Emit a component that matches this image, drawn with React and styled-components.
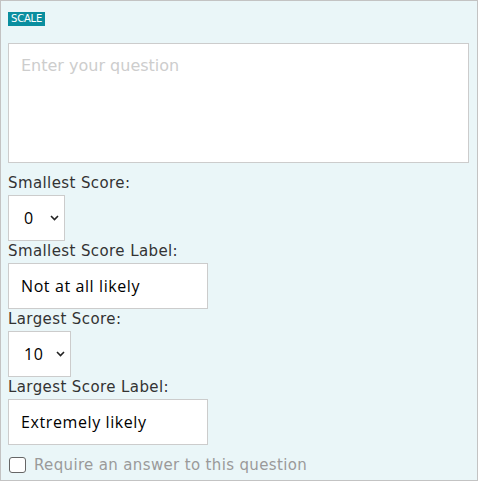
import React from "react";
import styled, { createGlobalStyle } from "styled-components";

const GlobalStyle = createGlobalStyle`
  html, body {
    margin: 0;
    padding: 0;
    background: #ffffff;
  }
  * {
    box-sizing: border-box;
  }
`;

const Card = styled.div`
  width: 478px;
  height: 481px;
  background: #eaf6f8;
  border: 1px solid #c3c3c3;
  padding: 11px 7px 0 7px;
  font-family: "DejaVu Sans", sans-serif;
  color: #333333;
  display: flex;
  flex-direction: column;
  align-items: flex-start;
`;

const Badge = styled.span`
  background: #0a8e9f;
  color: #ffffff;
  font-family: "DejaVu Sans", sans-serif;
  font-size: 10px;
  line-height: 14px;
  padding: 0 3px;
  letter-spacing: -0.2px;
`;

const Question = styled.textarea`
  margin-top: 17px;
  width: 461px;
  height: 120px;
  border: 1px solid #cccccc;
  background: #ffffff;
  padding: 12px;
  font-family: "DejaVu Sans", sans-serif;
  font-size: 16px;
  resize: none;
  outline: none;
  &::placeholder {
    color: #cdcdcd;
  }
`;

const Label = styled.label`
  display: block;
  font-size: 15px;
  line-height: 20px;
  letter-spacing: 0.4px;
  margin: ${(p) => (p.$first ? "10px" : "0")} 0 2px 0;
  color: #333333;
`;

const SelectWrap = styled.div`
  position: relative;
  width: ${(p) => p.$width}px;
  height: 46px;
`;

const Select = styled.select`
  appearance: none;
  -webkit-appearance: none;
  width: 100%;
  height: 100%;
  border: 1px solid #cccccc;
  border-radius: 0;
  background: #ffffff;
  padding: 0 0 0 15px;
  font-family: "Open Sans", sans-serif;
  font-size: 16px;
  letter-spacing: 0.6px;
  color: #000000;
  outline: none;
`;

const Chevron = styled.svg`
  position: absolute;
  right: 6px;
  top: 20px;
  width: 9px;
  height: 6px;
  pointer-events: none;
`;

const TextInput = styled.input`
  width: 200px;
  height: 46px;
  border: 1px solid #cccccc;
  background: #ffffff;
  padding: 0 12px;
  font-family: "Open Sans", sans-serif;
  font-size: 16px;
  letter-spacing: 0.6px;
  color: #000000;
  outline: none;
`;

const CheckRow = styled.label`
  margin-top: 11px;
  display: flex;
  align-items: center;
  gap: 8px;
  font-size: 15px;
  line-height: 18px;
  letter-spacing: 0.35px;
  color: #9a9a9a;
`;

const Box = styled.span`
  width: 17px;
  height: 16px;
  margin-left: 1px;
  border: 1px solid #666666;
  border-radius: 3px;
  background: #ffffff;
`;

function ScoreSelect({ value, width }) {
  return (
    <SelectWrap $width={width}>
      <Select defaultValue={value}>
        {Array.from({ length: 11 }, (_, i) => (
          <option key={i} value={String(i)}>
            {i}
          </option>
        ))}
      </Select>
      <Chevron viewBox="0 0 9 6">
        <path d="M1 1 L4.5 4.5 L8 1" fill="none" stroke="#222" strokeWidth="1.6" />
      </Chevron>
    </SelectWrap>
  );
}

export default function App() {
  return (
    <>
      <GlobalStyle />
      <Card>
        <Badge>SCALE</Badge>
        <Question placeholder="Enter your question" />
        <Label $first>Smallest Score:</Label>
        <ScoreSelect value="0" width={57} />
        <Label>Smallest Score Label:</Label>
        <TextInput defaultValue="Not at all likely" />
        <Label>Largest Score:</Label>
        <ScoreSelect value="10" width={63} />
        <Label>Largest Score Label:</Label>
        <TextInput defaultValue="Extremely likely" />
        <CheckRow>
          <Box />
          Require an answer to this question
        </CheckRow>
      </Card>
    </>
  );
}
